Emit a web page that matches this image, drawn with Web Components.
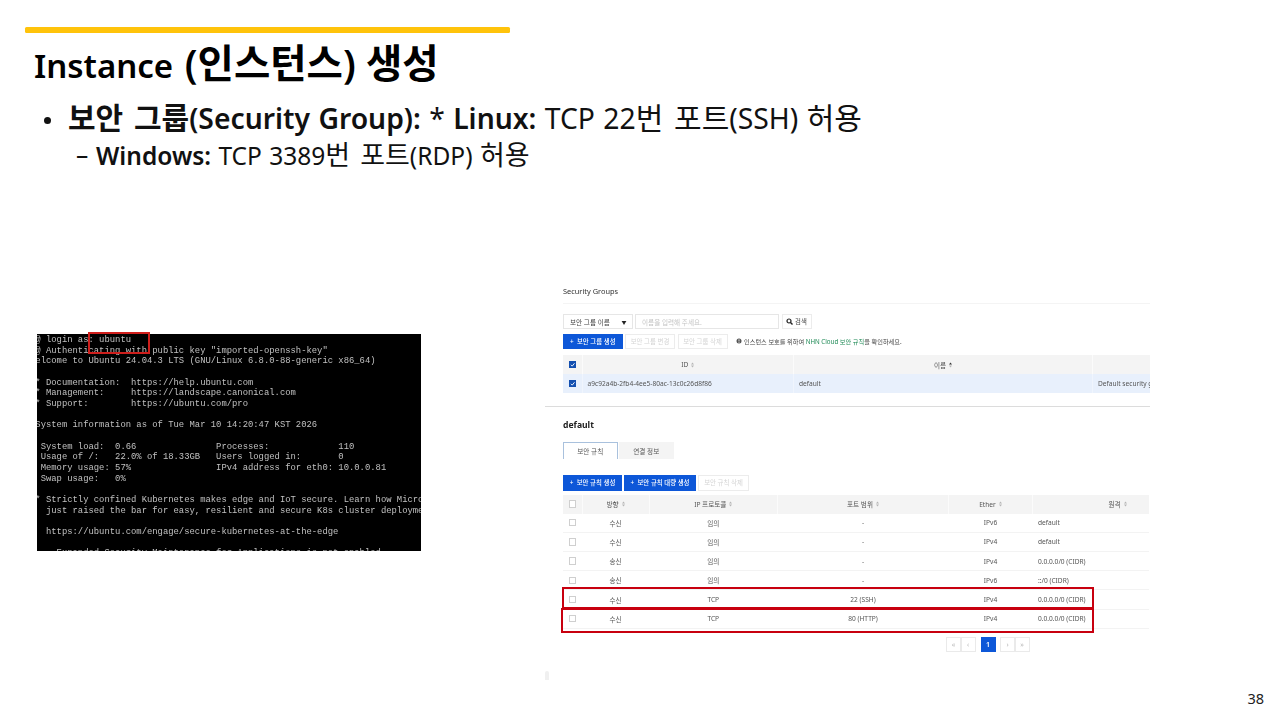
<!DOCTYPE html>
<html lang="ko"><head><meta charset="utf-8"><title>Instance 생성</title>
<style>
html,body{margin:0;padding:0;background:#fff}
body{width:1280px;height:720px;overflow:hidden;font-family:"Noto Sans","Noto Sans CJK KR",sans-serif;color:#000}
</style></head><body>
<slide-page number="38">
  <slide-heading>Instance <k-o>(인스턴스) 생성</k-o></slide-heading>
  <slide-point><b><k-o>보안 그룹</k-o>(Security Group):</b> * <b>Linux:</b> TCP 22<k-o>번 포트</k-o>(SSH) <k-o>허용</k-o></slide-point>
  <slide-subpoint><b>Windows:</b> TCP 3389<k-o>번 포트</k-o>(RDP) <k-o>허용</k-o></slide-subpoint>
  <slide-figures>
    <terminal-shot></terminal-shot>
    <sg-console>
      <sg-title>Security Groups</sg-title>
      <sg-bar gap="2.5" top="10">
        <sg-field w="69.5">보안 그룹 이름<span slot="end">▼</span></sg-field>
        <sg-field w="144" placeholder>이름을 입력해 주세요.</sg-field>
        <sg-btn w="30" plain><sg-glass></sg-glass>검색</sg-btn>
      </sg-bar>
      <sg-bar gap="2.5" top="4.5">
        <sg-btn w="59.5" primary>+&nbsp;&nbsp;보안 그룹 생성</sg-btn>
        <sg-btn w="50" disabled>보안 그룹 변경</sg-btn>
        <sg-btn w="50" disabled>보안 그룹 삭제</sg-btn>
        <sg-note>인스턴스 보호를 위하여 <em>NHN Cloud 보안 규칙</em>을 확인하세요.</sg-note>
      </sg-bar>
      <sg-table cols="19.5px 211.5px 299px 100px" top="6">
        <sg-row head><sg-cell><sg-check on></sg-check></sg-cell><sg-cell>ID<sg-sort></sg-sort></sg-cell><sg-cell>이름<sg-sort up></sg-sort></sg-cell><sg-cell></sg-cell></sg-row>
        <sg-row selected><sg-cell><sg-check on></sg-check></sg-cell><sg-cell left>a9c92a4b-2fb4-4ee5-80ac-13c0c26d8f86</sg-cell><sg-cell left>default</sg-cell><sg-cell left>Default security g</sg-cell></sg-row>
      </sg-table>
      <sg-divider></sg-divider>
      <sg-name>default</sg-name>
      <sg-tabs><sg-tab active>보안 규칙</sg-tab><sg-tab>연결 정보</sg-tab></sg-tabs>
      <sg-bar gap="2" top="16">
        <sg-btn w="59" primary>+&nbsp;&nbsp;보안 규칙 생성</sg-btn>
        <sg-btn w="72" primary>+&nbsp;&nbsp;보안 규칙 대량 생성</sg-btn>
        <sg-btn w="51" disabled>보안 규칙 삭제</sg-btn>
      </sg-bar>
      <sg-table cols="19.5px 67px 128.5px 171px 84px 170px" top="4" width="586">
        <sg-row head><sg-cell><sg-check></sg-check></sg-cell><sg-cell>방향<sg-sort></sg-sort></sg-cell><sg-cell>IP 프로토콜<sg-sort></sg-sort></sg-cell><sg-cell>포트 범위<sg-sort></sg-sort></sg-cell><sg-cell>Ether<sg-sort></sg-sort></sg-cell><sg-cell>원격<sg-sort></sg-sort></sg-cell></sg-row>
        <sg-row><sg-cell><sg-check></sg-check></sg-cell><sg-cell>수신</sg-cell><sg-cell>임의</sg-cell><sg-cell>-</sg-cell><sg-cell>IPv6</sg-cell><sg-cell left>default</sg-cell></sg-row>
        <sg-row><sg-cell><sg-check></sg-check></sg-cell><sg-cell>수신</sg-cell><sg-cell>임의</sg-cell><sg-cell>-</sg-cell><sg-cell>IPv4</sg-cell><sg-cell left>default</sg-cell></sg-row>
        <sg-row><sg-cell><sg-check></sg-check></sg-cell><sg-cell>송신</sg-cell><sg-cell>임의</sg-cell><sg-cell>-</sg-cell><sg-cell>IPv4</sg-cell><sg-cell left>0.0.0.0/0 (CIDR)</sg-cell></sg-row>
        <sg-row><sg-cell><sg-check></sg-check></sg-cell><sg-cell>송신</sg-cell><sg-cell>임의</sg-cell><sg-cell>-</sg-cell><sg-cell>IPv6</sg-cell><sg-cell left>::/0 (CIDR)</sg-cell></sg-row>
        <sg-row><sg-cell><sg-check></sg-check></sg-cell><sg-cell>수신</sg-cell><sg-cell>TCP</sg-cell><sg-cell>22 (SSH)</sg-cell><sg-cell>IPv4</sg-cell><sg-cell left>0.0.0.0/0 (CIDR)</sg-cell></sg-row>
        <sg-row><sg-cell><sg-check></sg-check></sg-cell><sg-cell>수신</sg-cell><sg-cell>TCP</sg-cell><sg-cell>80 (HTTP)</sg-cell><sg-cell>IPv4</sg-cell><sg-cell left>0.0.0.0/0 (CIDR)</sg-cell></sg-row>
      </sg-table>
      <sg-pager><sg-page>«</sg-page><sg-page>‹</sg-page><sg-page current>1</sg-page><sg-page>›</sg-page><sg-page>»</sg-page></sg-pager>
    </sg-console>
  </slide-figures>
</slide-page>
<script>
function def(name, css, html, init){
  const t=document.createElement('template');
  t.innerHTML='<style>'+css+'</style>'+html;
  customElements.define(name,class extends HTMLElement{
    constructor(){super();this.attachShadow({mode:'open'}).appendChild(t.content.cloneNode(true));}
    connectedCallback(){if(init)init(this);}
  });
}
const FONT='"Noto Sans","Noto Sans CJK KR",sans-serif';
def('k-o',`:host{font-size:var(--ko);word-spacing:var(--kows,0)}`,`<slot></slot>`);
def('slide-page',`:host{display:block;position:relative;width:1280px;height:720px;overflow:hidden;box-sizing:border-box;padding:27px 0 0 25px}
 .bar{width:485px;height:6px;background:#ffc30b;border-radius:1.5px}
 .num{position:absolute;right:16px;top:689px;font-size:14.5px;line-height:18px;color:#222}`,
 `<div class="bar"></div><slot></slot><div class="num"></div>`,
 el=>{el.shadowRoot.querySelector('.num').textContent=el.getAttribute('number');});
def('slide-heading',`:host{display:block;margin:5px 0 0 9px;height:52px;font-size:33px;--ko:39.5px;--kows:0;line-height:51px;font-weight:600;white-space:nowrap;word-spacing:3px;color:#000}`,`<slot></slot>`);
def('slide-point',`:host{display:flex;margin:9px 0 0 18px;height:38px;font-size:28.3px;--ko:30px;--kows:3px;line-height:38px;white-space:nowrap;color:#111}
 .m{flex:none;width:25px;display:flex;align-items:center}
 .m i{display:block;width:7px;height:7px;margin:4px 0 0 1px;border-radius:50%;background:#111}
 .t{word-spacing:1px}
 ::slotted(b){font-weight:600}`,`<span class="m"><i></i></span><span class="t"><slot></slot></span>`);
def('slide-subpoint',`:host{display:flex;margin:0 0 0 51px;height:36px;font-size:24.5px;--ko:27px;--kows:3px;line-height:36px;white-space:nowrap;color:#111}
 .m{flex:none;width:20px}
 .t{word-spacing:1px}
 ::slotted(b){font-weight:600}`,`<span class="m">–</span><span class="t"><slot></slot></span>`);
def('slide-figures',`:host{display:flex;align-items:flex-start;margin:-9px 0 0 12px}`,`<slot></slot>`);

const TERM=[
' @ login as: ubuntu',
' @ Authenticating with public key "imported-openssh-key"',
'Welcome to Ubuntu 24.04.3 LTS (GNU/Linux 6.8.0-88-generic x86_64)',
'',
' * Documentation:  https://help.ubuntu.com',
' * Management:     https://landscape.canonical.com',
' * Support:        https://ubuntu.com/pro',
'',
' System information as of Tue Mar 10 14:20:47 KST 2026',
'',
'  System load:  0.66               Processes:             110',
'  Usage of /:   22.0% of 18.33GB   Users logged in:       0',
'  Memory usage: 57%                IPv4 address for eth0: 10.0.0.81',
'  Swap usage:   0%',
'',
' * Strictly confined Kubernetes makes edge and IoT secure. Learn how MicroK8s',
'   just raised the bar for easy, resilient and secure K8s cluster deployment.',
'',
'   https://ubuntu.com/engage/secure-kubernetes-at-the-edge',
'',
'     Expanded Security Maintenance for Applications is not enabled.'
].join('\n');
def('terminal-shot',`:host{display:block;position:relative;width:384px;height:216.5px;margin-top:170px;background:#000;flex:none}
 .clip{width:100%;height:100%;overflow:hidden}
 pre{margin:0;transform:translate(-7px,.5px);font:8.87px/10.67px "Liberation Mono",monospace;color:#c0c0c0;filter:blur(.45px);white-space:pre}
 .mark{position:absolute;left:51px;top:-2px;width:58px;height:18px;border:2px solid #cf1f1c}`,
 `<div class="clip"><pre></pre></div><div class="mark"></div>`,
 el=>{el.shadowRoot.querySelector('pre').textContent=TERM;});

def('sg-console',`:host{display:block;position:relative;box-sizing:border-box;width:605px;height:400px;margin:120px 0 0 124px;padding:0 0 0 18px;overflow:hidden;flex:none;
   font-family:${FONT};font-size:6.6px;color:#555;filter:blur(.4px)}
 .hl{position:absolute;box-sizing:border-box;border:2.8px solid #c8000f}
 .a{left:17px;top:303px;width:532px;height:22px}
 .b{left:16px;top:323.5px;width:533px;height:25.5px}
 .speck{position:absolute;left:0;top:387px;width:4px;height:9px;background:#f0f0f0;border-radius:3px 3px 0 0}`,
 `<slot></slot><div class="hl a"></div><div class="hl b"></div><div class="speck"></div>`);
def('sg-title',`:host{display:block;height:20px;box-sizing:border-box;padding-top:2px;border-bottom:1px solid #f4f4f4;font-size:7.4px;line-height:10px;color:#333}`,`<slot></slot>`);
def('sg-bar',`:host{display:flex;align-items:stretch;white-space:nowrap}`,`<slot></slot>`,
 el=>{el.style.gap=el.getAttribute('gap')+'px';el.style.marginTop=el.getAttribute('top')+'px';});
def('sg-field',`:host{display:flex;align-items:center;justify-content:space-between;box-sizing:border-box;height:15px;padding:0 5px 0 6px;border:1px solid #e6e6e6;font-size:6.6px;color:#444}
 :host([placeholder]){color:#c4c4c4;justify-content:flex-start}
 ::slotted([slot=end]){font-size:5px;color:#222}`,`<slot></slot><slot name="end"></slot>`,
 el=>{el.style.width=el.getAttribute('w')+'px';});
def('sg-btn',`:host{display:flex;align-items:center;justify-content:center;gap:2px;box-sizing:border-box;height:15.5px;border:1px solid #ececec;background:#fff;font-size:6.4px;color:#d4d4d4;flex:none}
 :host([plain]){color:#444;height:15px}
 :host([primary]){background:#0d57d8;border-color:#0d57d8;color:#fff;font-weight:500}`,`<slot></slot>`,
 el=>{el.style.width=el.getAttribute('w')+'px';});
def('sg-glass',`:host{display:inline-flex}svg{display:block}`,`<svg width="7" height="7" viewBox="0 0 7 7"><circle cx="3" cy="3" r="2" fill="none" stroke="#222" stroke-width="1.2"/><path d="M4.5 4.5L6.5 6.5" stroke="#222" stroke-width="1.4"/></svg>`);
def('sg-note',`:host{display:flex;align-items:center;gap:0;margin-left:6px;font-size:6.2px;color:#444;white-space:pre}
 ::slotted(em){font-style:normal;color:#1f8a56}
 svg{margin-right:2px;flex:none}`,`<svg width="6" height="6" viewBox="0 0 6 6"><circle cx="3" cy="3" r="2.5" fill="#555"/><rect x="2.6" y="1.3" width=".8" height="2.2" fill="#fff"/><rect x="2.6" y="4" width=".8" height=".8" fill="#fff"/></svg><span><slot></slot></span>`);
def('sg-table',`:host{display:block;overflow:hidden;white-space:nowrap}`,`<slot></slot>`,
 el=>{el.style.setProperty('--cols',el.getAttribute('cols'));el.style.marginTop=el.getAttribute('top')+'px';if(el.getAttribute('width'))el.style.width=el.getAttribute('width')+'px';});
def('sg-row',`:host{display:grid;grid-template-columns:var(--cols);height:19.2px;box-sizing:border-box;border-bottom:1px solid #f3f3f3;color:#555;--sep:transparent}
 :host([head]){background:#f4f4f4;height:19px;border-bottom:0;color:#555;--sep:#fbfbfb}
 :host([selected]){background:#e8f0fc;border-bottom:0;--sep:#f0f5fd}`,`<slot></slot>`);
def('sg-cell',`:host{display:flex;align-items:center;justify-content:center;gap:3px;min-width:0;box-sizing:border-box;border-right:1px solid var(--sep);font-size:6.6px;white-space:nowrap}
 :host([left]){justify-content:flex-start;padding-left:5px}`,`<slot></slot>`);
def('sg-check',`:host{display:inline-flex;box-sizing:border-box;width:7.4px;height:7.4px;border:1px solid #cfcfcf;background:#fff}
 :host([on]){background:#134fb0;border-color:#134fb0}
 svg{display:none;width:100%;height:100%}
 :host([on]) svg{display:block}`,`<svg viewBox="0 0 6 6"><path d="M1 3.1L2.5 4.6L5 1.4" fill="none" stroke="#fff" stroke-width="1"/></svg>`);
def('sg-sort',`:host{display:inline-flex}svg{display:block}`,`<svg width="3" height="6" viewBox="0 0 3 6"><path d="M1.5 0.5L3 2.5H0Z" fill="#b5b5b5"/><path d="M1.5 5.5L3 3.5H0Z" fill="#b5b5b5"/></svg>`,
 el=>{if(el.hasAttribute('up'))el.shadowRoot.querySelector('path').setAttribute('fill','#333');});
def('sg-divider',`:host{display:block;height:1.5px;margin:12.5px 0 0 -18px;background:#dcdcdc}`,``);
def('sg-name',`:host{display:block;margin-top:13px;height:11px;font-size:8.6px;line-height:11px;font-weight:700;color:#222}`,`<slot></slot>`);
def('sg-tabs',`:host{display:flex;gap:1.5px;margin-top:11px;height:17px}`,`<slot></slot>`);
def('sg-tab',`:host{display:flex;align-items:center;justify-content:center;box-sizing:border-box;width:54.5px;height:17px;background:#f4f4f4;font-size:6.6px;color:#555}
 :host([active]){background:#fff;border:1px solid #a9c1dd;border-bottom:0}`,`<slot></slot>`);
def('sg-pager',`:host{display:flex;margin:8.5px 0 0 383.5px;height:15px}`,`<slot></slot>`);
def('sg-page',`:host{display:flex;align-items:center;justify-content:center;box-sizing:border-box;width:15px;height:15px;margin-left:-.5px;border:1px solid #eaeaea;font-size:7px;color:#bbb}
 :host(:nth-child(3)){margin:0 5px}
 :host([current]){background:#0d57d8;border-color:#0d57d8;color:#fff;font-weight:600}`,`<slot></slot>`);
</script>
</body></html>
